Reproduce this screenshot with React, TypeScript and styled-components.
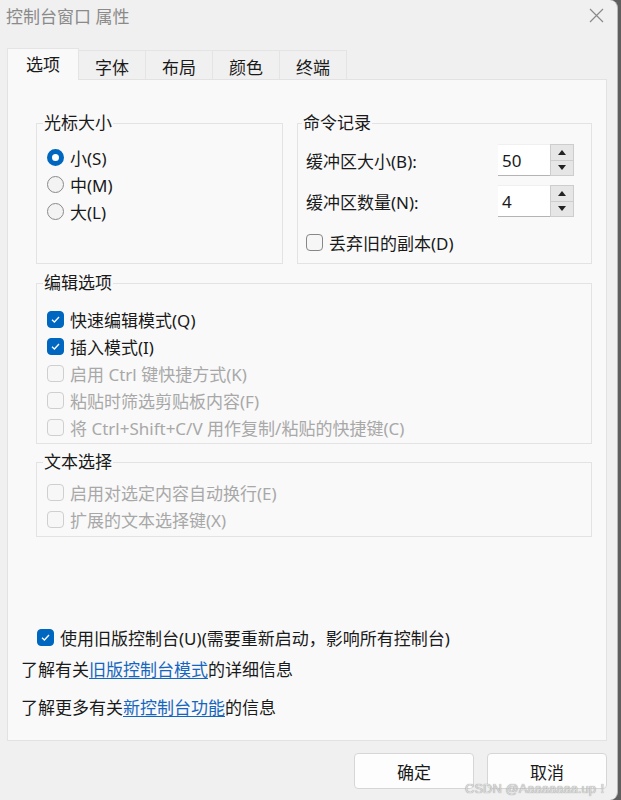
import styled, { createGlobalStyle } from "styled-components";

const GlobalStyle = createGlobalStyle`
  html, body {
    margin: 0;
    padding: 0;
    background: #5e5e5e;
  }
  body {
    font-family: "Noto Sans", "Noto Sans CJK SC", sans-serif;
    color: #1a1a1a;
  }
  * {
    box-sizing: border-box;
  }
`;

const Window = styled.div`
  position: relative;
  width: 618px;
  height: 800px;
  background: #f0f0f0;
  border-right: 1px solid #b8b8b8;
  border-radius: 0 8px 8px 0;
  overflow: hidden;
  display: flex;
  flex-direction: column;
`;

const TitleBar = styled.div`
  height: 30px;
  display: flex;
  align-items: center;
  justify-content: space-between;
  padding: 0 13px 0 6px;
  font-size: 17px;
  color: #8a8a8a;
`;

const Body = styled.div`
  padding: 18px 10px 0 7px;
`;

const TabStrip = styled.div`
  display: flex;
  align-items: flex-end;
  height: 32px;
  margin-bottom: -1px;
  position: relative;
  z-index: 1;
`;

const Tab = styled.div<{ $active?: boolean }>`
  display: flex;
  align-items: center;
  justify-content: center;
  font-size: 17px;
  border: 1px solid #e4e4e4;
  border-bottom: none;
  margin-left: -1px;
  &:first-child {
    margin-left: 0;
  }
  height: ${(p) => (p.$active ? "32px" : "29px")};
  margin-bottom: ${(p) => (p.$active ? "0" : "1px")};
  padding: ${(p) => (p.$active ? "0 18px 2px" : "2px 16px 0")};
  background: ${(p) => (p.$active ? "#f9f9f9" : "#f0f0f0")};
  color: #1a1a1a;
`;

const Panel = styled.div`
  height: 662px;
  border: 1px solid #e2e2e2;
  background: #f9f9f9;
  display: flex;
  flex-direction: column;
  padding: 0 14px 20px 13px;
`;

const Groups = styled.div`
  padding: 33px 0 0 15px;
  display: flex;
  flex-direction: column;
`;

const TopRow = styled.div`
  display: grid;
  grid-template-columns: 247px 295px;
  column-gap: 14px;
`;

const Group = styled.fieldset<{ $gap?: number; $pad?: string }>`
  margin: ${(p) => `${p.$gap ?? 0}px 0 0 0`};
  min-width: 0;
  border: 1px solid #e3e3e3;
  padding: ${(p) => p.$pad ?? "11px 10px 7px 10px"};
`;

const Legend = styled.legend`
  margin-left: -4px;
  padding: 0 1px;
  font-size: 17px;
  line-height: 20px;
  color: #1a1a1a;
`;

const Row = styled.div<{ $disabled?: boolean }>`
  display: flex;
  align-items: center;
  gap: 6px;
  height: 27px;
  font-size: 17px;
  white-space: nowrap;
  color: ${(p) => (p.$disabled ? "#a8a8a8" : "#1a1a1a")};
`;

const Radio = styled.span<{ $checked?: boolean }>`
  width: 17px;
  height: 17px;
  border-radius: 50%;
  flex: none;
  background: ${(p) => (p.$checked ? "#ffffff" : "#f3f3f3")};
  border: ${(p) => (p.$checked ? "5px solid #0067c0" : "1px solid #8a8a8a")};
`;

const Box = styled.span<{ $checked?: boolean; $disabled?: boolean }>`
  width: 17px;
  height: 17px;
  border-radius: 4px;
  flex: none;
  display: flex;
  align-items: center;
  justify-content: center;
  background: ${(p) => (p.$checked ? "#0067c0" : p.$disabled ? "#f7f7f7" : "#f6f6f6")};
  border: 1px solid
    ${(p) => (p.$checked ? "#0067c0" : p.$disabled ? "#cfcfcf" : "#878787")};
`;

const SpinRow = styled.div<{ $gap?: number }>`
  display: flex;
  align-items: center;
  justify-content: space-between;
  height: 32px;
  margin-bottom: ${(p) => p.$gap ?? 0}px;
  font-size: 17px;
`;

const Spin = styled.div`
  display: flex;
  height: 32px;
`;

const SpinValue = styled.div`
  width: 52px;
  height: 32px;
  background: #ffffff;
  border-top: 1px solid #f0f0f0;
  border-bottom: 1px solid #b4b4b4;
  padding-left: 4px;
  display: flex;
  align-items: center;
  font-size: 17px;
`;

const SpinButtons = styled.div`
  width: 24px;
  display: flex;
  flex-direction: column;
`;

const SpinButton = styled.div`
  flex: 1;
  background: #e6e6e6;
  border: 1px solid #cdcdcd;
  display: flex;
  align-items: center;
  justify-content: center;
  & + & {
    border-top: none;
  }
`;

const Bottom = styled.div`
  margin-top: auto;
  display: flex;
  flex-direction: column;
`;

const LegacyRow = styled(Row)`
  margin-left: 16px;
  margin-bottom: 7px;
`;

const InfoLine = styled.div<{ $gap?: number }>`
  font-size: 17px;
  line-height: 24px;
  margin-top: ${(p) => p.$gap ?? 0}px;
  white-space: nowrap;
`;

const Link = styled.a`
  color: #1666c0;
  text-decoration: underline;
  text-underline-offset: 2px;
`;

const Footer = styled.div`
  display: flex;
  justify-content: flex-end;
  gap: 13px;
  padding-top: 12px;
`;

const Button = styled.button`
  width: 120px;
  height: 36px;
  background: #fdfdfd;
  border: 1px solid #d6d6d6;
  border-radius: 4px;
  font-family: inherit;
  font-size: 17px;
  color: #1a1a1a;
`;

const Watermark = styled.div`
  position: absolute;
  right: 8px;
  bottom: 2px;
  font-family: "Liberation Sans", sans-serif;
  font-size: 13px;
  color: #dcdcdc;
  text-shadow: 0 0 1px #7a7a7a;
  pointer-events: none;
`;

function Check() {
  return (
    <svg width="11" height="11" viewBox="0 0 11 11">
      <path d="M2 5.8 L4.4 8 L9 3" fill="none" stroke="#fff" strokeWidth="1.3" />
    </svg>
  );
}

function CheckItem({
  label,
  checked,
  disabled,
}: {
  label: string;
  checked?: boolean;
  disabled?: boolean;
}) {
  return (
    <Row $disabled={disabled}>
      <Box $checked={checked} $disabled={disabled}>
        {checked && <Check />}
      </Box>
      {label}
    </Row>
  );
}

function Arrow({ up }: { up?: boolean }) {
  return (
    <svg width="8" height="5" viewBox="0 0 8 5">
      <path d={up ? "M0 5 L4 0 L8 5 Z" : "M0 0 L8 0 L4 5 Z"} fill="#222" />
    </svg>
  );
}

function SpinBox({ value }: { value: string }) {
  return (
    <Spin>
      <SpinValue>{value}</SpinValue>
      <SpinButtons>
        <SpinButton>
          <Arrow up />
        </SpinButton>
        <SpinButton>
          <Arrow />
        </SpinButton>
      </SpinButtons>
    </Spin>
  );
}

const tabs = ["选项", "字体", "布局", "颜色", "终端"];

const editOptions = [
  { label: "快速编辑模式(Q)", checked: true },
  { label: "插入模式(I)", checked: true },
  { label: "启用 Ctrl 键快捷方式(K)", disabled: true },
  { label: "粘贴时筛选剪贴板内容(F)", disabled: true },
  { label: "将 Ctrl+Shift+C/V 用作复制/粘贴的快捷键(C)", disabled: true },
];

const selectOptions = [
  { label: "启用对选定内容自动换行(E)", disabled: true },
  { label: "扩展的文本选择键(X)", disabled: true },
];

export default function App() {
  return (
    <>
      <GlobalStyle />
      <Window>
        <TitleBar>
          <span>控制台窗口 属性</span>
          <svg width="15" height="15" viewBox="0 0 15 15">
            <path d="M1 1 L14 14 M14 1 L1 14" stroke="#8a8a8a" strokeWidth="1.2" />
          </svg>
        </TitleBar>
        <Body>
          <TabStrip>
            {tabs.map((t, i) => (
              <Tab key={t} $active={i === 0}>
                {t}
              </Tab>
            ))}
          </TabStrip>
          <Panel>
            <Groups>
              <TopRow>
                <Group>
                  <Legend>光标大小</Legend>
                  <Row>
                    <Radio $checked />
                    小(S)
                  </Row>
                  <Row>
                    <Radio />
                    中(M)
                  </Row>
                  <Row>
                    <Radio />
                    大(L)
                  </Row>
                </Group>
                <Group $pad="11px 17px 7px 8px">
                  <Legend>命令记录</Legend>
                  <SpinRow $gap={9}>
                    缓冲区大小(B):
                    <SpinBox value="50" />
                  </SpinRow>
                  <SpinRow $gap={12}>
                    缓冲区数量(N):
                    <SpinBox value="4" />
                  </SpinRow>
                  <CheckItem label="丢弃旧的副本(D)" />
                </Group>
              </TopRow>
              <Group $gap={9} $pad="13px 10px 2px 10px">
                <Legend>编辑选项</Legend>
                {editOptions.map((o) => (
                  <CheckItem key={o.label} {...o} />
                ))}
              </Group>
              <Group $gap={8} $pad="7px 10px 3px 10px">
                <Legend>文本选择</Legend>
                {selectOptions.map((o) => (
                  <CheckItem key={o.label} {...o} />
                ))}
              </Group>
            </Groups>
            <Bottom>
              <LegacyRow>
                <Box $checked>
                  <Check />
                </Box>
                使用旧版控制台(U)(需要重新启动，影响所有控制台)
              </LegacyRow>
              <InfoLine>
                了解有关<Link>旧版控制台模式</Link>的详细信息
              </InfoLine>
              <InfoLine $gap={14}>
                了解更多有关<Link>新控制台功能</Link>的信息
              </InfoLine>
            </Bottom>
          </Panel>
          <Footer>
            <Button>确定</Button>
            <Button>取消</Button>
          </Footer>
        </Body>
        <Watermark>CSDN @Aaaaaaaa.up！</Watermark>
      </Window>
    </>
  );
}
